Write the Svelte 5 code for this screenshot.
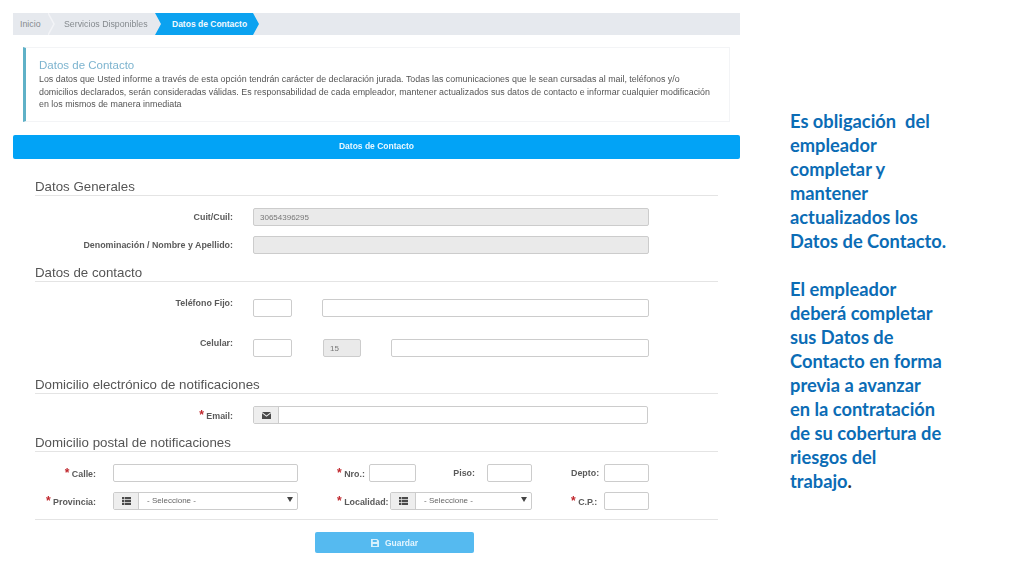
<script lang="ts">
  const asideFirst = ['Es obligación  del', 'empleador', 'completar y', 'mantener', 'actualizados los', 'Datos de Contacto.'];
  const asideSecond = ['El empleador', 'deberá completar', 'sus Datos de', 'Contacto en forma', 'previa a avanzar', 'en la contratación', 'de su cobertura de', 'riesgos del'];
</script>

{#snippet listIcon()}
  <svg width="9" height="8" viewBox="0 0 9 8" aria-hidden="true">
    <path d="M0 0h2.200v2.200H0zM2.800 0H9v2.200H2.800zM0 2.900h2.200v2.200H0zM2.800 2.900H9v2.200H2.800zM0 5.800h2.200V8H0zM2.800 5.800H9V8H2.800z" fill="#4a4a4a"/>
  </svg>
{/snippet}

{#snippet dropdown(text: string)}
  <span class="addon">{@render listIcon()}</span>
  <span class="select-text">{text}</span>
  <svg class="caret" width="6" height="5" viewBox="0 0 6 5" aria-hidden="true"><path d="M0 0h6L3 5z" fill="#444"/></svg>
{/snippet}

<main class="page">
  <section class="left">
    <nav class="crumbs">
      <span class="crumb inicio">Inicio</span>
      <svg class="sep" width="7" height="22" viewBox="0 0 7 22" aria-hidden="true"><path d="M0 0l6 11-6 11" fill="none" stroke="#f3f4f7" stroke-width="1.500"/></svg>
      <span class="crumb servicios">Servicios Disponibles</span>
      <span class="crumb active">Datos de Contacto</span>
    </nav>

    <div class="notice">
      <h2>Datos de Contacto</h2>
      <p>Los datos que Usted informe a través de esta opción tendrán carácter de declaración jurada. Todas las comunicaciones que le sean cursadas al mail, teléfonos y/o domicilios declarados, serán consideradas válidas. Es responsabilidad de cada empleador, mantener actualizados sus datos de contacto e informar cualquier modificación en los mismos de manera inmediata</p>
    </div>

    <div class="bar">Datos de Contacto</div>

    <form class="form">
      <h3 class="heading first">Datos Generales</h3>
      <div class="row r-a">
        <span class="label">Cuit/Cuil:</span>
        <input class="input wide off" value="30654396295" disabled />
      </div>
      <div class="row r-b">
        <span class="label">Denominación / Nombre y Apellido:</span>
        <input class="input wide off" disabled />
      </div>

      <h3 class="heading">Datos de contacto</h3>
      <div class="row r-c">
        <span class="label high">Teléfono Fijo:</span>
        <input class="input area" />
        <input class="input phone" />
      </div>
      <div class="row r-d">
        <span class="label high">Celular:</span>
        <input class="input area" />
        <input class="input prefix off" value="15" disabled />
        <input class="input mobile" />
      </div>

      <h3 class="heading h-mail">Domicilio electrónico de notificaciones</h3>
      <div class="row r-a">
        <span class="label low"><b class="req">*</b> Email:</span>
        <div class="group email">
          <span class="addon">
            <svg width="9" height="7" viewBox="0 0 9 7" aria-hidden="true">
              <path d="M0 0h9L4.500 3.400zM0 1.200V7h9V1.200L4.500 4.700z" fill="#4a4a4a"/>
            </svg>
          </span>
        </div>
      </div>

      <h3 class="heading">Domicilio postal de notificaciones</h3>
      <div class="row r-a">
        <span class="label low c-first"><b class="req">*</b> Calle:</span>
        <input class="input c-street" />
        <span class="label low c-nro"><b class="req">*</b> Nro.:</span>
        <input class="input c-num" />
        <span class="label c-piso">Piso:</span>
        <input class="input c-small" />
        <span class="label c-depto">Depto:</span>
        <input class="input c-last" />
      </div>
      <div class="row r-b">
        <span class="label low c-first"><b class="req">*</b> Provincia:</span>
        <div class="group c-street sel">{@render dropdown('- Seleccione -')}</div>
        <span class="label low c-loc"><b class="req">*</b> Localidad:</span>
        <div class="group c-locsel sel">{@render dropdown('- Seleccione -')}</div>
        <span class="label low c-cp"><b class="req">*</b> C.P.:</span>
        <input class="input c-last" />
      </div>

      <hr class="rule" />

      <div class="actions">
        <button type="button" class="save">
          <svg width="8" height="8" viewBox="0 0 9 9" aria-hidden="true">
            <path d="M0 0h7l2 2v7H0zM2 1v2.500h4.500V1zM2 5.500V8h5V5.500z" fill="#d8f0fc" fill-rule="evenodd"/>
          </svg>
          Guardar
        </button>
      </div>
    </form>
  </section>

  <aside class="aside">
    {#each asideFirst as line}<div class="line">{line}</div>{/each}
    <div class="line blank"></div>
    {#each asideSecond as line}<div class="line">{line}</div>{/each}
    <div class="line">trabajo<span class="dot">.</span></div>
  </aside>
</main>

<style>
  :global(body) {
    margin: 0;
    background: #fff;
  }
  .page {
    display: flex;
    width: 1024px;
    height: 576px;
    overflow: hidden;
    background: #fff;
    font-family: "Liberation Sans", Arial, sans-serif;
  }
  .left {
    width: 727px;
    margin-left: 13px;
    padding-top: 13px;
    flex: none;
    filter: blur(0.35px);
  }
  .crumbs {
    display: flex;
    align-items: center;
    height: 22px;
    background: #e6e9ee;
    font-size: 8.800px;
    color: #858a8e;
  }
  .crumb.inicio {
    margin-left: 7px;
    width: 28px;
  }
  .crumb.servicios {
    margin-left: 9px;
    width: 91px;
  }
  .crumb.active {
    width: 104px;
    height: 22px;
    line-height: 22px;
    padding-left: 17px;
    box-sizing: border-box;
    background: #0ba2f0;
    color: #f2faff;
    font-size: 8.500px;
    font-weight: 700;
    clip-path: polygon(0 0, 98px 0, 100% 50%, 98px 100%, 0 100%, 6px 50%);
  }

  .notice {
    margin: 12px 10px 0;
    height: 75px;
    box-sizing: border-box;
    padding: 11px 12px 0 13px;
    border: 1px solid #f3f4f6;
    border-left: 3px solid #5fb1c7;
  }
  .notice h2 {
    margin: 0;
    font-size: 11.500px;
    line-height: 13px;
    font-weight: 400;
    color: #7db4cf;
  }
  .notice p {
    margin: 1px 0 0;
    font-size: 8.900px;
    line-height: 12.500px;
    color: #555;
  }

  .bar {
    margin-top: 13px;
    height: 24px;
    line-height: 22px;
    border-radius: 2px;
    background: #02a3f6;
    color: #e8f7ff;
    font-size: 8.500px;
    font-weight: 700;
    text-align: center;
  }

  .form {
    display: flex;
    flex-direction: column;
    margin-left: 22px;
    width: 683px;
  }
  .heading {
    height: 16px;
    margin: 11px 0 0;
    border-bottom: 1px solid #e4e4e4;
    font-size: 13.300px;
    line-height: 15px;
    font-weight: 400;
    color: #555;
    white-space: nowrap;
  }
  .heading.first {
    margin-top: 20px;
  }
  .heading.h-mail {
    margin-top: 20px;
  }
  .row {
    display: flex;
    align-items: center;
    height: 18px;
    flex: none;
  }
  .r-a {
    margin-top: 12px;
  }
  .r-b {
    margin-top: 10px;
  }
  .r-c {
    margin-top: 17px;
  }
  .r-d {
    margin-top: 22px;
  }
  .label {
    width: 198px;
    margin-right: 20px;
    flex: none;
    text-align: right;
    font-size: 8.900px;
    font-weight: 700;
    color: #5a5a5a;
    white-space: nowrap;
  }
  .label.high {
    align-self: flex-start;
    margin-top: -1px;
  }
  .label.low {
    margin-top: 2px;
  }
  .req {
    color: #c0272d;
    font-size: 12px;
    line-height: 9px;
  }

  .input {
    display: block;
    height: 18px;
    flex: none;
    box-sizing: border-box;
    padding: 0 6px;
    border: 1px solid #ccc;
    border-radius: 2px;
    background: #fff;
    font: 8px "Liberation Sans", Arial, sans-serif;
    color: #777;
  }
  .off {
    background: #eaeaea;
  }
  .wide {
    width: 396px;
  }
  .area {
    width: 39px;
  }
  .phone {
    width: 327px;
    margin-left: 30px;
  }
  .prefix {
    width: 38px;
    margin-left: 31px;
  }
  .mobile {
    width: 258px;
    margin-left: 30px;
  }

  .group {
    display: flex;
    align-items: center;
    height: 18px;
    flex: none;
    box-sizing: border-box;
    border: 1px solid #ccc;
    border-radius: 2px;
    background: #fff;
  }
  .email {
    width: 395px;
  }
  .addon {
    display: flex;
    align-items: center;
    justify-content: center;
    width: 24px;
    height: 100%;
    flex: none;
    border-right: 1px solid #ccc;
    background: #eee;
  }
  .select-text {
    margin-left: 8px;
    margin-top: -2px;
    font-size: 8px;
    color: #666;
  }
  .caret {
    margin-left: auto;
    margin-right: 4px;
    margin-top: -3px;
  }

  .label.c-first {
    width: 61px;
    margin-right: 17px;
  }
  .c-street {
    width: 185px;
  }
  .label.c-nro,
  .label.c-loc {
    width: auto;
    margin-left: 39px;
    margin-right: 0;
    text-align: left;
  }
  .label.c-nro {
    width: 28px;
    margin-right: 4px;
  }
  .label.c-loc {
    width: 51px;
    margin-right: 2px;
  }
  .c-num {
    width: 47px;
  }
  .label.c-piso {
    width: 59px;
    margin-right: 12px;
  }
  .c-small {
    width: 45px;
  }
  .label.c-depto {
    width: 28px;
    margin-left: 39px;
    margin-right: 5px;
  }
  .c-last {
    width: 45px;
  }
  .c-locsel {
    width: 142px;
  }
  .label.c-cp {
    width: 28px;
    margin-left: 39px;
    margin-right: 5px;
    text-align: left;
  }

  .rule {
    width: 100%;
    height: 0;
    margin: 9px 0 0;
    border: 0;
    border-top: 1px solid #e4e4e4;
  }
  .actions {
    display: flex;
    margin-top: 12px;
    padding-left: 280px;
  }
  .save {
    display: flex;
    align-items: center;
    justify-content: center;
    gap: 6px;
    width: 159px;
    height: 21px;
    padding: 0;
    border: 0;
    border-radius: 2px;
    background: #55baf0;
    color: #e3f5fe;
    font: 700 8.500px "Liberation Sans", Arial, sans-serif;
  }

  .aside {
    margin-left: 50px;
    padding-top: 109px;
    font-family: Lato, "Open Sans", sans-serif;
    font-size: 18.300px;
    font-weight: 700;
    line-height: 24px;
    color: #0b6cb5;
  }
  .line {
    white-space: pre;
  }
  .blank {
    height: 24px;
  }
  .dot {
    color: #333;
  }
</style>
